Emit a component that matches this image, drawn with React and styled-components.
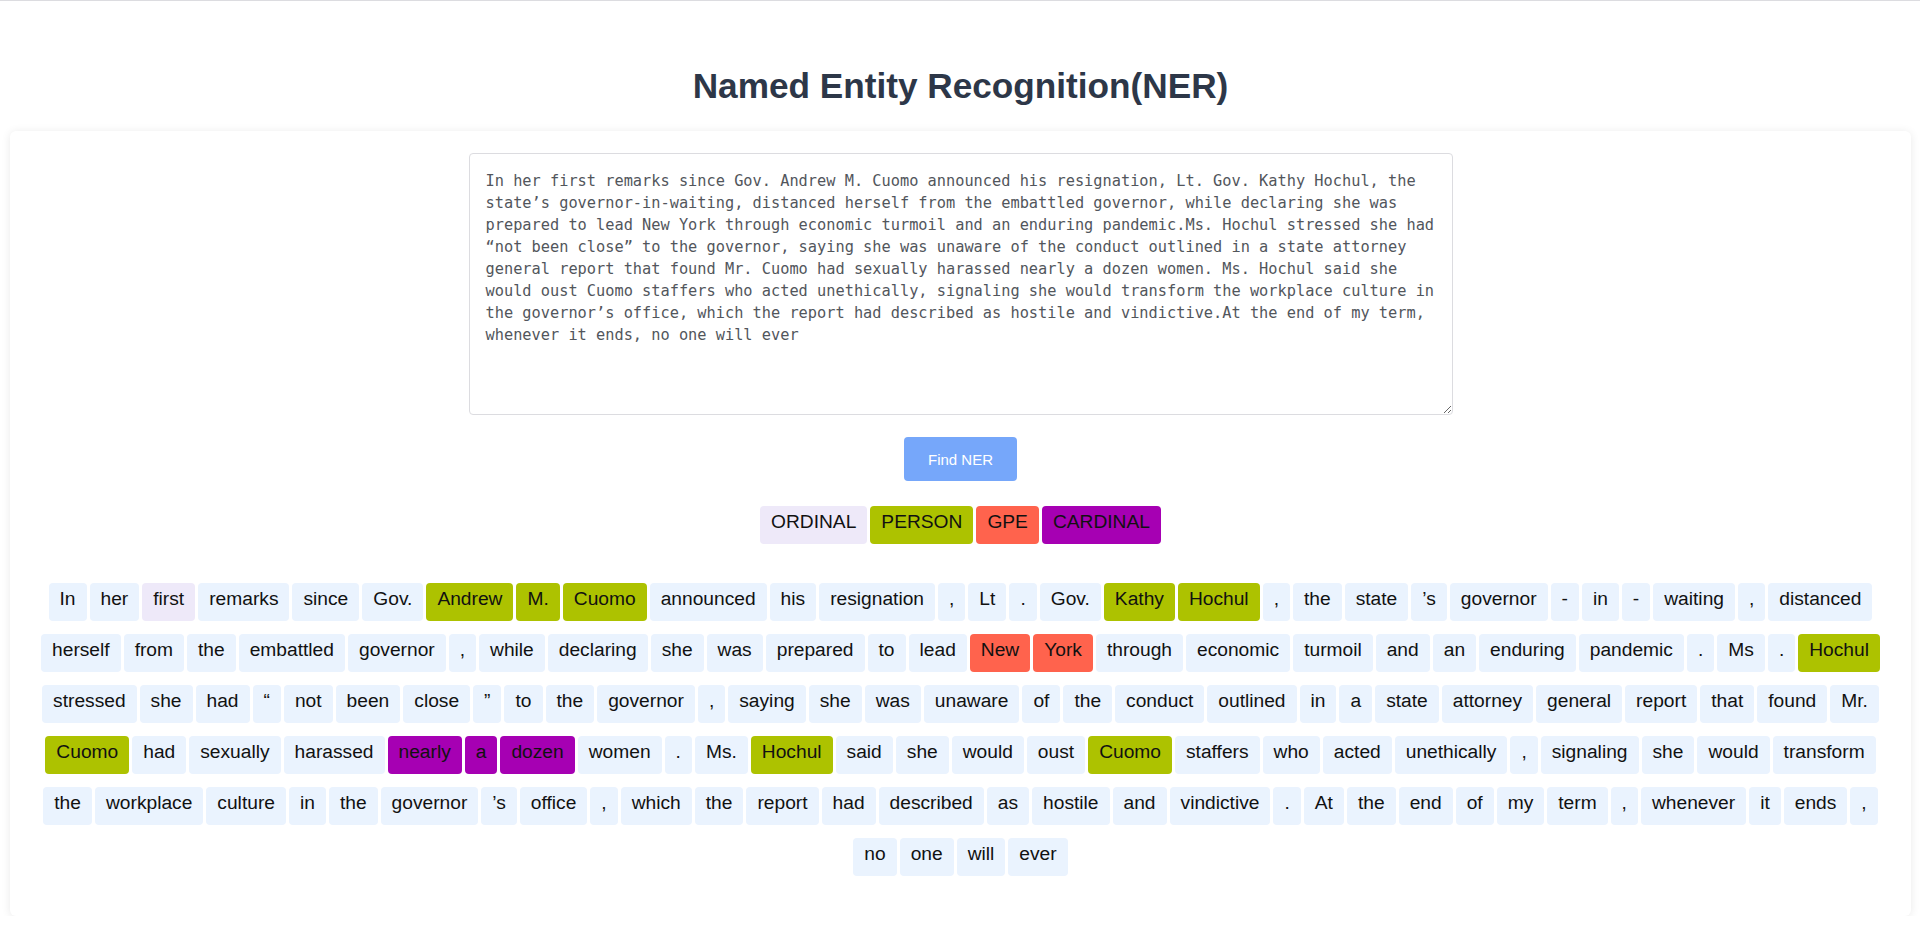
import React from 'react'
import styled, { createGlobalStyle } from 'styled-components'

const GlobalStyle = createGlobalStyle`
    body {
        margin: 0;
        background: #ffffff;
        font-family: "Liberation Sans", Arial, sans-serif;
    }
`

const sample = 'In her first remarks since Gov. Andrew M. Cuomo announced his resignation, Lt. Gov. Kathy Hochul, the state\u2019s governor-in-waiting, distanced herself from the embattled governor, while declaring she was prepared to lead New York through economic turmoil and an enduring pandemic.Ms. Hochul stressed she had \u201cnot been close\u201d to the governor, saying she was unaware of the conduct outlined in a state attorney general report that found Mr. Cuomo had sexually harassed nearly a dozen women. Ms. Hochul said she would oust Cuomo staffers who acted unethically, signaling she would transform the workplace culture in the governor\u2019s office, which the report had described as hostile and vindictive.At the end of my term, whenever it ends, no one will ever'

const colors = {
    ORDINAL: '#eee9f9',
    PERSON: '#adc200',
    GPE: '#ff634d',
    CARDINAL: '#a600b3',
}

const legend = ['ORDINAL', 'PERSON', 'GPE', 'CARDINAL']

// [text, label]
const tokens = [
    ['In'], ['her'], ['first', 'ORDINAL'], ['remarks'], ['since'], ['Gov.'],
    ['Andrew', 'PERSON'], ['M.', 'PERSON'], ['Cuomo', 'PERSON'], ['announced'], ['his'],
    ['resignation'], [','], ['Lt'], ['.'], ['Gov.'], ['Kathy', 'PERSON'], ['Hochul', 'PERSON'],
    [','], ['the'], ['state'], ['\u2019s'], ['governor'], ['-'], ['in'], ['-'], ['waiting'], [','], ['distanced'],
    ['herself'], ['from'], ['the'], ['embattled'], ['governor'], [','], ['while'], ['declaring'],
    ['she'], ['was'], ['prepared'], ['to'], ['lead'], ['New', 'GPE'], ['York', 'GPE'], ['through'],
    ['economic'], ['turmoil'], ['and'], ['an'], ['enduring'], ['pandemic'], ['.'], ['Ms'], ['.'],
    ['Hochul', 'PERSON'],
    ['stressed'], ['she'], ['had'], ['\u201c'], ['not'], ['been'], ['close'], ['\u201d'], ['to'], ['the'],
    ['governor'], [','], ['saying'], ['she'], ['was'], ['unaware'], ['of'], ['the'], ['conduct'],
    ['outlined'], ['in'], ['a'], ['state'], ['attorney'], ['general'], ['report'], ['that'], ['found'], ['Mr.'],
    ['Cuomo', 'PERSON'], ['had'], ['sexually'], ['harassed'], ['nearly', 'CARDINAL'], ['a', 'CARDINAL'],
    ['dozen', 'CARDINAL'], ['women'], ['.'], ['Ms.'], ['Hochul', 'PERSON'], ['said'], ['she'], ['would'],
    ['oust'], ['Cuomo', 'PERSON'], ['staffers'], ['who'], ['acted'], ['unethically'], [','], ['signaling'],
    ['she'], ['would'], ['transform'],
    ['the'], ['workplace'], ['culture'], ['in'], ['the'], ['governor'], ['\u2019s'], ['office'], [','],
    ['which'], ['the'], ['report'], ['had'], ['described'], ['as'], ['hostile'], ['and'], ['vindictive'],
    ['.'], ['At'], ['the'], ['end'], ['of'], ['my'], ['term'], [','], ['whenever'], ['it'], ['ends'], [','],
    ['no'], ['one'], ['will'], ['ever'],
]

function App() {
    return (
        <>
            <GlobalStyle />
            <Page>
                <Title>Named Entity Recognition(NER)</Title>
                <Card>
                    <TextBox defaultValue={sample} spellCheck={false} />
                    <FindButton>Find NER</FindButton>
                    <Legend>
                        {legend.map(l => (
                            <Chip key={l} bg={colors[l]}>{l}</Chip>
                        ))}
                    </Legend>
                    <Tokens>
                        {tokens.map(([text, label], i) => (
                            <Chip key={i} bg={label ? colors[label] : undefined}>{text}</Chip>
                        ))}
                    </Tokens>
                </Card>
            </Page>
        </>
    )
}

export default App

const Page = styled.div`
    border-top: 1px solid #dcdce0;
    padding: 0 9px 0 10px;
`

const Title = styled.h1`
    margin: 65px 0 25px;
    text-align: center;
    font-size: 35.2px;
    font-weight: 700;
    color: #2d3748;
    font-family: "Liberation Sans", Arial, sans-serif;
`

const Card = styled.div`
    background: #ffffff;
    border-radius: 6px;
    box-shadow: 0 1px 10px rgba(0, 0, 0, 0.09);
    padding: 22px 20px 33.5px;
    display: flex;
    flex-direction: column;
    align-items: center;
`

const TextBox = styled.textarea`
    box-sizing: border-box;
    width: 984px;
    height: 262px;
    padding: 16px;
    border: 1px solid #dcdce0;
    border-radius: 4px;
    font-family: "DejaVu Sans Mono", monospace;
    font-size: 15.3px;
    line-height: 22px;
    color: #52565c;
    outline: none;
    resize: vertical;
`

const FindButton = styled.button`
    margin-top: 22px;
    height: 44px;
    padding: 0 24px;
    border: none;
    border-radius: 4px;
    background: #76a7fa;
    color: #ffffff;
    font-family: "Liberation Sans", Arial, sans-serif;
    font-size: 15px;
    cursor: pointer;
`

const Legend = styled.div`
    margin-top: 25px;
    display: flex;
    justify-content: center;
`

const Tokens = styled.div`
    margin-top: 32.5px;
    display: flex;
    flex-wrap: wrap;
    justify-content: center;
    width: 100%;
`

const Chip = styled.span`
    display: inline-block;
    margin: 0 1.5px;
    padding: 5px 11px 11px;
    line-height: 22px;
    border-radius: 4px;
    background: ${props => props.bg || '#eaf3fe'};
    color: #111111;
    font-size: 19.2px;
    font-family: "Liberation Sans", Arial, sans-serif;

    ${Tokens} & {
        margin: 6.5px 1.5px;
    }
`
